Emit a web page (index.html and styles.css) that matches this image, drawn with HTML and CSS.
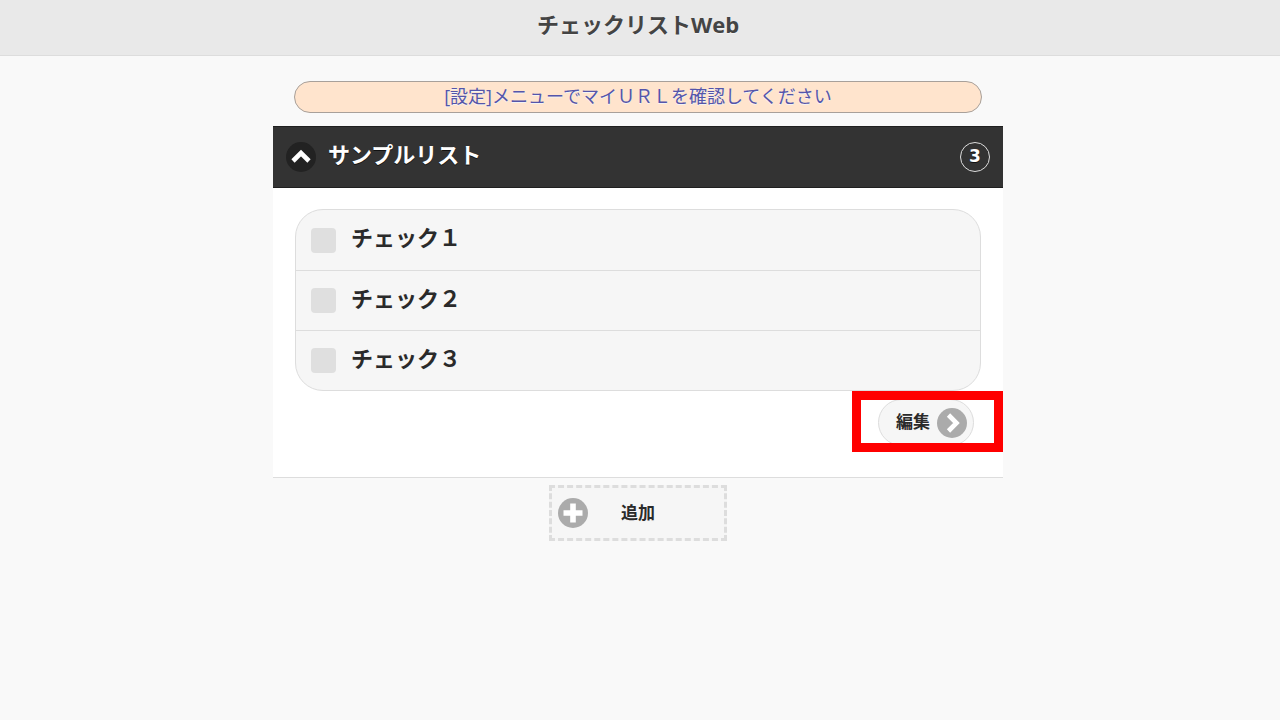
FILE: index.html
```html
<!DOCTYPE html>
<html lang="ja">
<head>
<meta charset="utf-8">
<title>チェックリストWeb</title>
<link rel="stylesheet" href="styles.css">
</head>
<body>
<header class="header"><h1 class="title">チェックリストWeb</h1></header>
<main class="main">
  <a class="notice" href="#settings">[設定]メニューでマイＵＲＬを確認してください</a>
  <section class="panel">
    <h2 class="panel-heading">
      <button class="toggle" type="button">
        <svg class="icon" viewBox="0 0 30 30" aria-hidden="true"><circle cx="15" cy="15" r="15" fill="#222"/><path d="M7 19 15 11 23 19" fill="none" stroke="#fff" stroke-width="4.6"/></svg>
        <span class="toggle-label">サンプルリスト</span>
        <span class="count">3</span>
      </button>
    </h2>
    <div class="panel-body">
      <div class="checks">
        <label class="check"><input class="box" type="checkbox"><span class="check-label">チェック１</span></label>
        <label class="check"><input class="box" type="checkbox"><span class="check-label">チェック２</span></label>
        <label class="check"><input class="box" type="checkbox"><span class="check-label">チェック３</span></label>
      </div>
      <div class="actions">
        <button class="edit" type="button"><span class="edit-label">編集</span>
          <svg class="icon" viewBox="0 0 30 30" aria-hidden="true"><circle cx="15" cy="15" r="15" fill="#ababab"/><path d="M11.500 7 19.500 15 11.500 23" fill="none" stroke="#fff" stroke-width="4.600"/></svg>
        </button>
        <div class="highlight"></div>
      </div>
    </div>
  </section>
  <button class="add" type="button">
    <svg class="icon" viewBox="0 0 30 30" aria-hidden="true"><circle cx="15" cy="15" r="15" fill="#ababab"/><path d="M15 5.500V24.500M5.500 15H24.500" fill="none" stroke="#fff" stroke-width="5.600"/></svg>
    <span class="add-label">追加</span>
  </button>
</main>
</body>
</html>
```
FILE: styles.css
```css
* { box-sizing: border-box; }
body {
  margin: 0;
  min-height: 100vh;
  background: #f9f9f9;
  color: #2a2a2a;
  font-family: "Open Sans", "Noto Sans CJK JP", sans-serif;
  text-shadow: 0 1px 0 #f3f3f3;
}
button { font: inherit; color: inherit; text-shadow: inherit; cursor: pointer; }
.header {
  height: 56px;
  padding: 7px 4px 0 0;
  background: #e9e9e9;
  border-bottom: 1px solid #ddd;
  text-align: center;
}
.title {
  margin: 0;
  font-size: 22px;
  line-height: 34px;
  font-weight: 700;
  color: #444;
}
.main {
  display: flex;
  flex-direction: column;
  align-items: center;
  padding: 25px 4px 0 0;
}
.notice {
  width: 688px;
  max-width: 94%;
  margin-bottom: 13px;
  padding-bottom: 2px;
  border: 1px solid #a8a09a;
  border-radius: 16px;
  background: #ffe4cd;
  color: #55a;
  font-size: 18px;
  line-height: 28px;
  text-align: center;
  text-decoration: none;
}
.panel { width: 100%; max-width: 730px; }
.panel-heading { margin: 0; }
.toggle {
  display: flex;
  align-items: center;
  width: 100%;
  height: 62px;
  padding: 0 13px;
  border: solid #1f1f1f;
  border-width: 1px 0;
  background: #333;
  color: #fff;
  text-shadow: 0 1px 0 #111;
  font-size: 22px;
  font-weight: 700;
}
.icon { flex: none; width: 30px; height: 30px; }
.toggle-label { flex: 1; padding: 0 0 6px 12px; text-align: left; line-height: 32px; }
.count {
  width: 30px;
  height: 30px;
  border: 1px solid #ddd;
  border-radius: 50%;
  font-family: "DejaVu Sans", sans-serif;
  font-size: 17px;
  line-height: 27px;
}
.panel-body {
  padding: 21px 22px 25px;
  background: #fff;
  border-bottom: 1px solid #ddd;
}
.checks {
  border: 1px solid #ddd;
  border-radius: 28px;
  background: #f6f6f6;
}
.check {
  display: flex;
  align-items: center;
  gap: 15px;
  height: 60px;
  padding-left: 15px;
  font-size: 22px;
  font-weight: 700;
}
.check + .check { border-top: 1px solid #ddd; }
.box {
  appearance: none;
  width: 25px;
  height: 25px;
  margin: 0;
  border-radius: 4px;
  background: #dfdfdf;
}
.check-label { padding-bottom: 6px; line-height: 32px; }
.actions {
  position: relative;
  display: flex;
  justify-content: flex-end;
  padding: 8px 7px 6px 0;
}
.edit {
  display: flex;
  align-items: center;
  gap: 7px;
  height: 47px;
  padding: 0 6px 0 17px;
  border: 1px solid #ddd;
  border-radius: 24px;
  background: #f6f6f6;
  font-size: 17px;
  font-weight: 700;
}
.edit-label { padding-bottom: 4px; }
.highlight {
  position: absolute;
  top: 0;
  right: -22px;
  width: 151px;
  height: 61px;
  border: 9px solid #f00;
  pointer-events: none;
}
.add {
  display: flex;
  align-items: center;
  width: 178px;
  height: 56px;
  margin-top: 7px;
  padding: 0 36px 0 6px;
  border: 3px dashed #ddd;
  background: #f6f6f6;
  font-size: 17px;
  font-weight: 700;
}
.add-label { flex: 1; padding-bottom: 4px; text-align: center; }
```
